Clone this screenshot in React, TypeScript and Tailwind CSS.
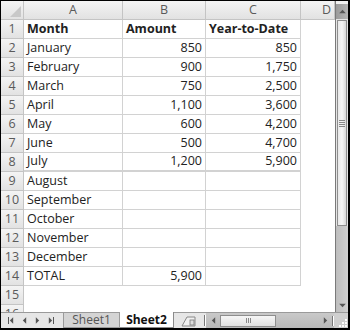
import React from "react";

const rows: [string, string, string][] = [
  ["Month", "Amount", "Year-to-Date"],
  ["January", "850", "850"],
  ["February", "900", "1,750"],
  ["March", "750", "2,500"],
  ["April", "1,100", "3,600"],
  ["May", "600", "4,200"],
  ["June", "500", "4,700"],
  ["July", "1,200", "5,900"],
  ["August", "", ""],
  ["September", "", ""],
  ["October", "", ""],
  ["November", "", ""],
  ["December", "", ""],
  ["TOTAL", "5,900", ""],
];

const hdr = "bg-gradient-to-b from-[#f4f4f4] to-[#e2e2e2] border-r border-b border-[#c4c4c4] text-[#5a5a5a] flex items-center justify-center";
const cell = "border-r border-b border-[#d2d2d2] flex items-center px-[3px] whitespace-nowrap overflow-hidden";

function Tri({ dir }: { dir: "l" | "r" | "u" | "d" }) {
  const pts = { l: "5,0 5,8 1,4", r: "1,0 1,8 5,4", u: "0,5 8,5 4,1", d: "0,1 8,1 4,5" }[dir];
  const vb = dir === "l" || dir === "r" ? "0 0 6 8" : "0 0 8 6";
  return (
    <svg viewBox={vb} className={dir === "l" || dir === "r" ? "w-[5px] h-[7px]" : "w-[7px] h-[5px]"}>
      <polygon points={pts} fill="#555" />
    </svg>
  );
}

export default function App() {
  return (
    <div className="w-[350px] h-[330px] bg-white border-t border-l border-r-2 border-b-2 border-black flex flex-col overflow-hidden text-[12.5px] text-[#222]" style={{ fontFamily: '"Open Sans", sans-serif' }}>
      <div className="flex h-[311px] shrink-0">
        {/* sheet grid */}
        <div className="grid grid-cols-[23px_99px_83px_95px_34px] auto-rows-[19px] w-[334px] h-[311px] overflow-hidden content-start">
          <div className={`${hdr} relative`}>
            <svg viewBox="0 0 10 10" className="absolute right-[2px] bottom-[2px] w-[11px] h-[11px]">
              <polygon points="10,0 10,10 0,10" fill="#c8c8c8" />
            </svg>
          </div>
          <div className={hdr}>A</div>
          <div className={hdr}>B</div>
          <div className={hdr}>C</div>
          <div className={`${hdr} !justify-end pr-[3px]`}>D</div>

          {rows.map((r, i) => (
            <React.Fragment key={i}>
              <div className={hdr}>{i + 1}</div>
              <div className={`${cell} ${i === 0 ? "font-bold" : ""} ${i === 7 ? "border-b-2" : ""}`}>{r[0]}</div>
              <div className={`${cell} ${i === 0 ? "font-bold" : "justify-end"} ${i === 7 ? "border-b-2" : ""}`}>{r[1]}</div>
              <div className={`${cell} ${i === 0 ? "font-bold" : "justify-end"} ${i === 7 ? "border-b-2" : ""}`}>{r[2]}</div>
              <div />
            </React.Fragment>
          ))}
          <div className={hdr}>15</div>
          <div />
          <div />
          <div />
          <div />
          <div className={hdr}>16</div>
          <div />
          <div />
          <div />
          <div />
        </div>

        {/* vertical scrollbar */}
        <div className="w-[13px] border-l border-[#7a7a7a] bg-[#e4e4e4] flex flex-col">
          <div className="h-[3px] bg-[#f2f2f2]" />
          <div className="h-[15px] bg-gradient-to-r from-[#9a9a9a] to-[#b4b4b4] flex items-center justify-center">
            <Tri dir="u" />
          </div>
          <div className="h-[206px] mt-[1px] mx-[1px] border border-[#8e8e8e] bg-gradient-to-r from-[#e8e8e8] via-[#f6f6f6] to-[#d8d8d8] flex items-center justify-center">
            <div className="flex flex-col gap-[1px]">
              <div className="w-[6px] h-px bg-[#888]" />
              <div className="w-[6px] h-px bg-[#888]" />
              <div className="w-[6px] h-px bg-[#888]" />
              <div className="w-[6px] h-px bg-[#888]" />
            </div>
          </div>
          <div className="flex-1 bg-gradient-to-r from-[#bdbdbd] to-[#d0d0d0]" />
          <div className="h-[14px] bg-gradient-to-r from-[#bdbdbd] to-[#d0d0d0] flex items-center justify-center">
            <Tri dir="d" />
          </div>
        </div>
      </div>

      {/* tab bar */}
      <div className="flex-1 flex items-stretch border-t border-[#9a9a9a] bg-[#e6e6e6] text-[12px]">
        <div className="w-[60px] flex items-center justify-around px-[3px]">
          <div className="flex items-center"><div className="w-px h-[7px] bg-[#555]" /><Tri dir="l" /></div>
          <Tri dir="l" />
          <Tri dir="r" />
          <div className="flex items-center"><Tri dir="r" /><div className="w-px h-[7px] bg-[#555]" /></div>
        </div>
        <div className="w-[57px] ml-[2px] bg-[#d4d4d4] border-x border-b border-[#9a9a9a] flex items-center justify-center text-[#555] leading-none">Sheet1</div>
        <div className="w-[54px] bg-white border-b border-r border-[#8a8a8a] flex items-center justify-center font-bold text-[#111] leading-none -mt-px">Sheet2</div>
        <div className="w-[30px] flex items-center justify-center">
          <svg viewBox="0 0 16 12" className="w-[16px] h-[12px]">
            <path d="M1 11 L6 2 L14 2 L14 11 Z" fill="#f0f0f0" stroke="#888" strokeWidth="1" />
            <rect x="9" y="5" width="4" height="5" fill="#ddd" stroke="#777" strokeWidth="0.8" />
          </svg>
        </div>
        <div className="w-[2px] my-[2px] bg-[#777] border-r border-white" />
        <div className="w-[128px] flex items-center bg-gradient-to-b from-[#c9c9c9] to-[#b8b8b8]">
          <div className="w-[14px] flex items-center justify-center"><Tri dir="l" /></div>
          <div className="w-[56px] h-[12px] border border-[#8e8e8e] bg-gradient-to-b from-[#f6f6f6] to-[#e0e0e0] flex items-center justify-center gap-[1px]">
            <div className="w-px h-[5px] bg-[#888]" />
            <div className="w-px h-[5px] bg-[#888]" />
            <div className="w-px h-[5px] bg-[#888]" />
          </div>
          <div className="flex-1" />
          <div className="w-[14px] flex items-center justify-center"><Tri dir="r" /></div>
          <div className="w-[2px] h-[10px] bg-[#777] border-r border-white" />
        </div>
        <div className="flex-1 bg-[#cfcfcf] relative">
          <svg viewBox="0 0 12 12" className="absolute right-0 bottom-0 w-[12px] h-[12px]">
            <rect x="9" y="9" width="2" height="2" fill="#fff" />
            <rect x="6" y="9" width="2" height="2" fill="#fff" />
            <rect x="9" y="6" width="2" height="2" fill="#fff" />
            <rect x="3" y="9" width="2" height="2" fill="#fff" />
            <rect x="6" y="6" width="2" height="2" fill="#fff" />
            <rect x="9" y="3" width="2" height="2" fill="#fff" />
          </svg>
        </div>
      </div>
    </div>
  );
}
